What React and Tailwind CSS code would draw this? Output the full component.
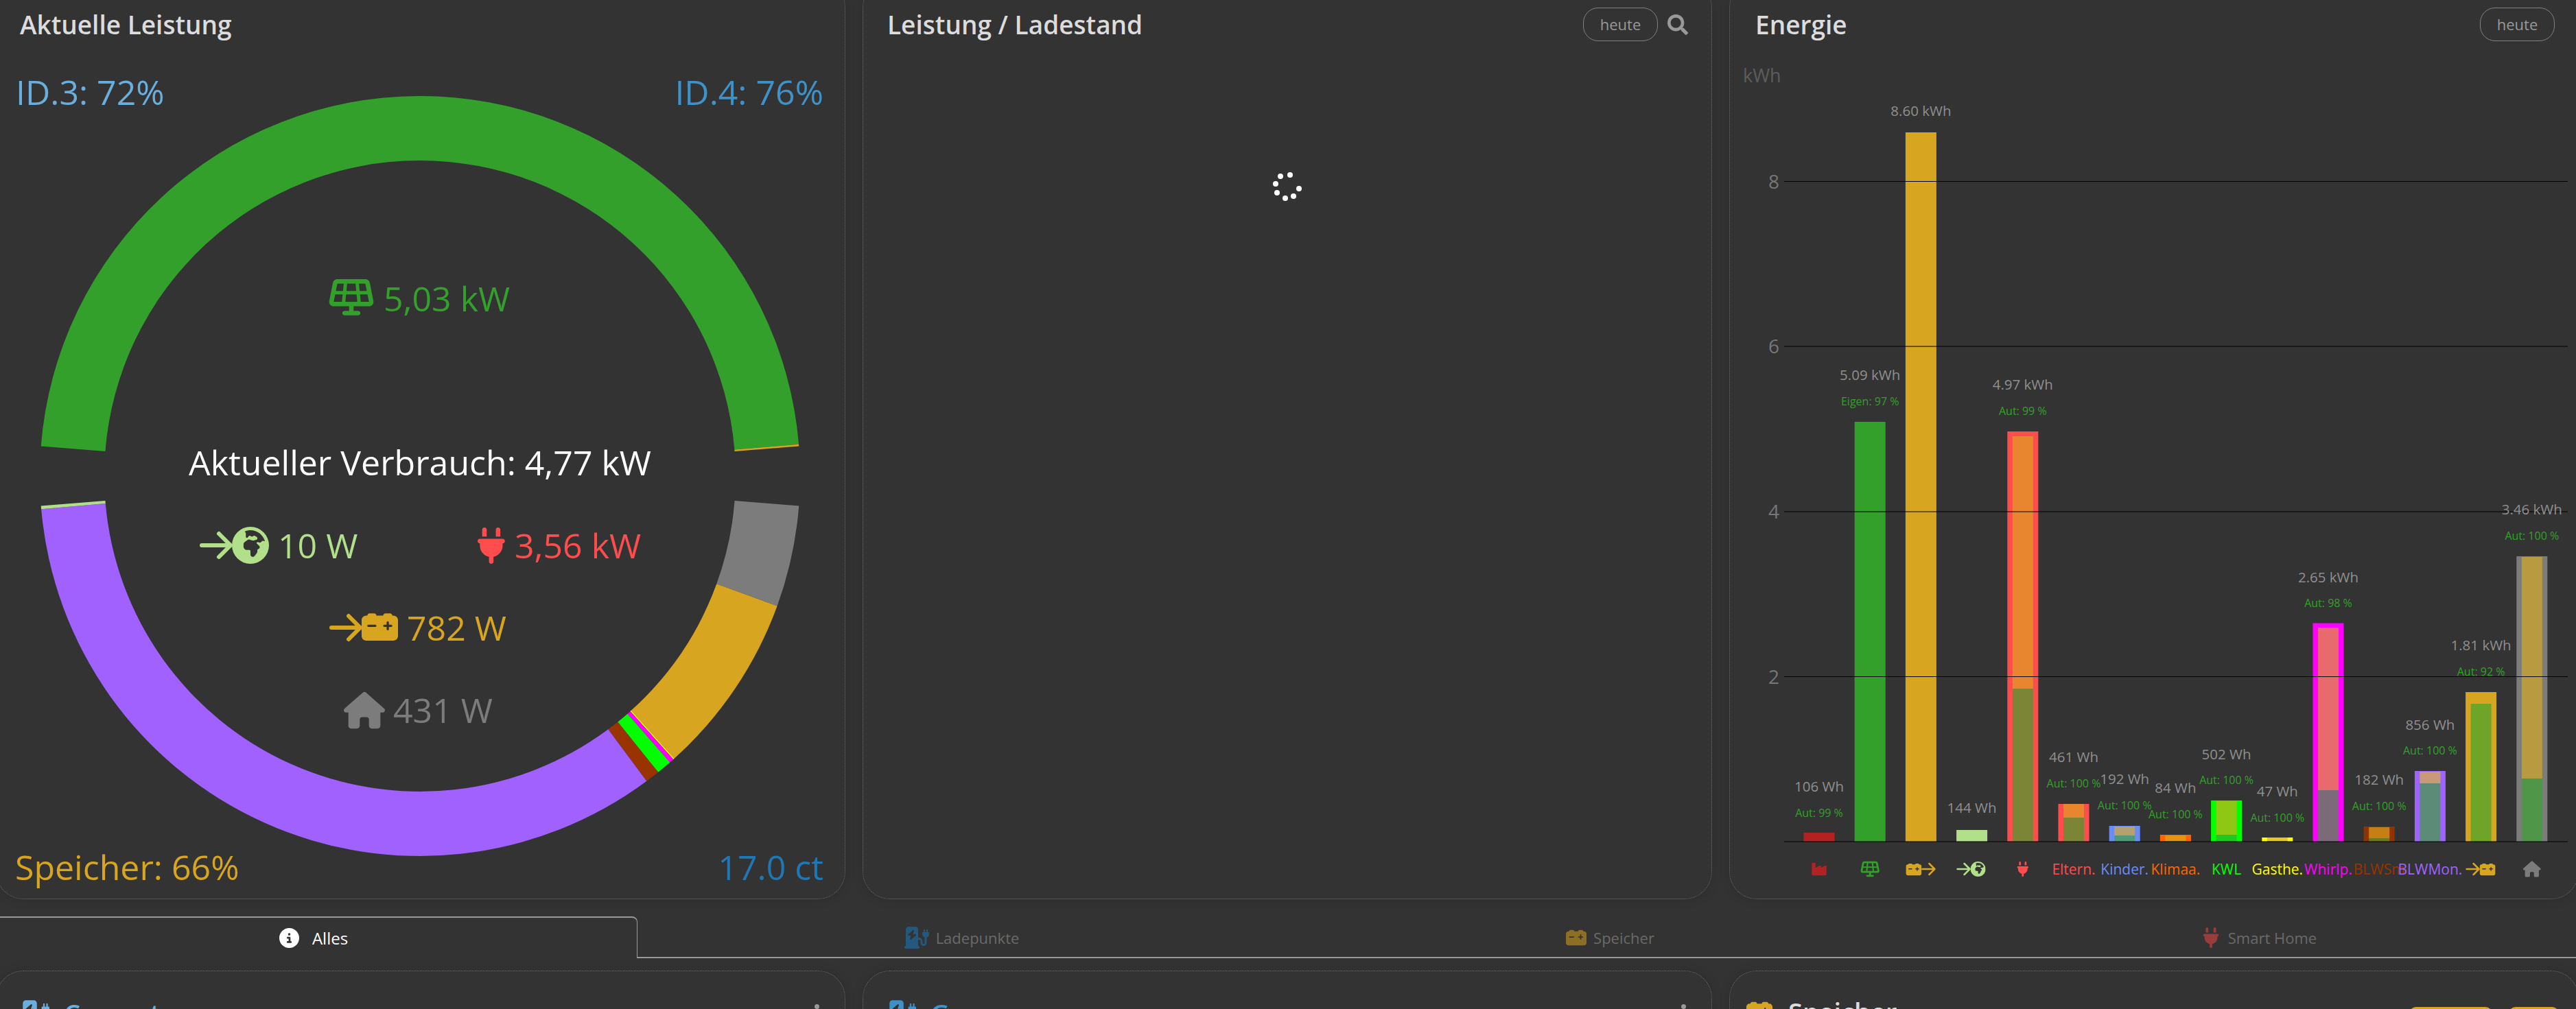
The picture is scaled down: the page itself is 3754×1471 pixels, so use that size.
import { FaSearch } from "react-icons/fa";
import {
  FaSolarPanel,
  FaEarthAfrica,
  FaPlug,
  FaCarBattery,
  FaHouse,
  FaIndustry,
  FaChargingStation,
  FaCircleInfo,
} from "react-icons/fa6";

const GREEN = "#33a02c";
const GOLD = "#d8a520";
const GRID = "#b2df8a";
const RED = "#ff4c4c";
const HOME = "#7c7c7c";
const PURPLE = "#a161ff";

const CX = 611;
const CY = 693;
const R_OUT = 554;
const R_IN = 460;

const arcPath = (a0, a1) => {
  const p = (r, a) => {
    const rad = (a * Math.PI) / 180;
    return `${(CX + r * Math.cos(rad)).toFixed(2)} ${(CY + r * Math.sin(rad)).toFixed(2)}`;
  };
  const large = Math.abs(a1 - a0) > 180 ? 1 : 0;
  return `M${p(R_OUT, a0)} A${R_OUT} ${R_OUT} 0 ${large} 1 ${p(R_OUT, a1)} L${p(R_IN, a1)} A${R_IN} ${R_IN} 0 ${large} 0 ${p(R_IN, a0)} Z`;
};

const SEGMENTS = [
  { from: 184.5, to: 355.2, color: GREEN },
  { from: 355.2, to: 355.5, color: GOLD },
  { from: 4.5, to: 20, color: HOME },
  { from: 20, to: 48, color: GOLD },
  { from: 48, to: 48.2, color: "#ffff00" },
  { from: 48.2, to: 48.9, color: "#ff00ff" },
  { from: 48.9, to: 51.2, color: "#00ff00" },
  { from: 51.2, to: 53.4, color: "#993300" },
  { from: 53.4, to: 175, color: PURPLE },
  { from: 175, to: 175.5, color: GRID },
];

const BARS = [
  { top: 1213, color: "#b22222", value: "106 Wh", aut: "Aut: 99 %", valueY: 1145.5, autY: 1184 },
  { top: 614, color: GREEN, value: "5.09 kWh", aut: "Eigen: 97 %", valueY: 546, autY: 584 },
  { top: 192, color: GOLD, value: "8.60 kWh", valueY: 161 },
  { top: 1209, color: GRID, value: "144 Wh", valueY: 1177 },
  { top: 628, color: RED, value: "4.97 kWh", aut: "Aut: 99 %", valueY: 560, autY: 598, inner: { top: 635, split: 1003, upper: "#e8862f", lower: "#7c8536" } },
  { top: 1171, color: RED, value: "461 Wh", aut: "Aut: 100 %", valueY: 1103, autY: 1141, inner: { top: 1171, split: 1191, upper: "#e8862f", lower: "#7c8536" } },
  { top: 1203, color: "#6b8cf7", value: "192 Wh", aut: "Aut: 100 %", valueY: 1135, autY: 1173, inner: { top: 1204, split: 1217, upper: "#b5a070", lower: "#4f9a78" } },
  { top: 1216, color: "#ff6600", value: "84 Wh", aut: "Aut: 100 %", valueY: 1148, autY: 1186, inner: { top: 1217, split: 1225, upper: "#e8930f", lower: "#8c8a20" } },
  { top: 1166, color: "#00ff00", value: "502 Wh", aut: "Aut: 100 %", valueY: 1099, autY: 1136, inner: { top: 1167, split: 1216, upper: "#8fc814", lower: "#1fc81f" } },
  { top: 1220, color: "#ffff00", value: "47 Wh", aut: "Aut: 100 %", valueY: 1153, autY: 1191, inner: { top: 1220, split: 1225, upper: "#e8c81a", lower: "#8c8a20" } },
  { top: 907.5, color: "#ff00ff", value: "2.65 kWh", aut: "Aut: 98 %", valueY: 840.5, autY: 878, inner: { top: 914, split: 1151, upper: "#e86a6c", lower: "#7d6a78" } },
  { top: 1204, color: "#8f3400", value: "182 Wh", aut: "Aut: 100 %", valueY: 1136, autY: 1174, inner: { top: 1205, split: 1221, upper: "#c57f15", lower: "#6b7a20" } },
  { top: 1123, color: "#9f64ff", value: "856 Wh", aut: "Aut: 100 %", valueY: 1055.5, autY: 1093, inner: { top: 1124, split: 1141, upper: "#c99a78", lower: "#5c8c78" } },
  { top: 1008, color: GOLD, value: "1.81 kWh", aut: "Aut: 92 %", valueY: 940, autY: 978, inner: { top: 1025, split: 1025, upper: "#6ea428", lower: "#6ea428" } },
  { top: 810, color: HOME, value: "3.46 kWh", aut: "Aut: 100 %", valueY: 742, autY: 780, inner: { top: 811, split: 1134, upper: "#b89a40", lower: "#4f9648" } },
];

const BAR_X = (i) => 2650 + 74.2 * i;
const BASE = 1226;

const X_LABELS = [
  [5, "Eltern.", RED],
  [6, "Kinder.", "#6b8cf7"],
  [7, "Klimaa.", "#ff6600"],
  [8, "KWL", "#00ff00"],
  [9, "Gasthe.", "#ffff00"],
  [10, "Whirlp.", "#ff00ff"],
  [11, "BLWSm", "#993300"],
  [12, "BLWMon.", "#9f64ff"],
];

const SPINNER_DOTS = [
  [15, 10],
  [29, 8],
  [8, 21],
  [42, 28],
  [10, 34],
  [22, 42],
  [34, 39],
];

// thin arrow with rounded ends, as in the flow icons
const Arrow = ({ x, y, len, head, width, color }) => (
  <path
    d={`M${x} ${y}H${x + len}M${x + len - head} ${y - head}L${x + len} ${y}L${x + len - head} ${y + head}`}
    fill="none"
    stroke={color}
    strokeWidth={width}
    strokeLinecap="round"
    strokeLinejoin="round"
  />
);

const Title = ({ children }) => (
  <h2 className="text-[37px] leading-none font-semibold text-[#dcdcdc]">{children}</h2>
);

const HeuteButton = () => (
  <button className="h-[49px] w-[109px] rounded-[22px] border border-[#808080] text-[22px] text-[#999999]">
    heute
  </button>
);

const Card = ({ children, className = "" }) => (
  <section
    className={`rounded-[40px] border border-dotted border-[#6e6e6e] bg-[#333333] shadow-[0_0_16px_rgba(0,0,0,0.14)] ${className}`}
  >
    {children}
  </section>
);

const PowerChart = () => (
  <svg width="1238" height="1252" viewBox="-6 59 1238 1252" className="block">
    {SEGMENTS.map((s) => (
      <path key={s.from} d={arcPath(s.from, s.to)} fill={s.color} />
    ))}

    <text x="22" y="152" fontSize="50" fill="#69aedc">ID.3: 72%</text>
    <text x="1199" y="152" fontSize="50" fill="#3f92c8" textAnchor="end">ID.4: 76%</text>

    <FaSolarPanel x="478" y="399.4" size="66" color={GREEN} />
    <text x="558" y="453" fontSize="50" fill={GREEN}>5,03 kW</text>

    <text x="611" y="692" fontSize="50" fill="#ffffff" textAnchor="middle">Aktueller Verbrauch: 4,77 kW</text>

    <Arrow x={293} y={794} len={42} head={17} width={6} color={GRID} />
    <FaEarthAfrica x="337" y="767" size="54" color={GRID} />
    <text x="404" y="813" fontSize="50" fill={GRID}>10 W</text>

    <FaPlug x="688.4" y="768" size="53" color={RED} />
    <text x="749" y="813" fontSize="50" fill={RED}>3,56 kW</text>

    <Arrow x={482} y={914} len={42} head={17} width={6} color={GOLD} />
    <FaCarBattery x="526" y="886.5" size="53" color={GOLD} />
    <text x="592" y="933" fontSize="50" fill={GOLD}>782 W</text>

    <FaHouse x="500" y="1004.5" size="60" color={HOME} />
    <text x="572" y="1053" fontSize="50" fill={HOME}>431 W</text>

    <text x="21" y="1282" fontSize="50" fill={GOLD}>Speicher: 66%</text>
    <text x="1199" y="1282" fontSize="50" fill="#1f77b4" textAnchor="end">17.0 ct</text>
  </svg>
);

const EnergyChart = () => (
  <svg width="1238" height="1252" viewBox="2520 59 1238 1252" className="block">
    <text x="2539" y="119" fontSize="27" fill="#5c5c5c">kWh</text>

    {BARS.map((b, i) => {
      const cx = BAR_X(i);
      return (
        <g key={b.value}>
          <rect x={cx - 22.5} y={b.top} width="45" height={BASE - b.top} fill={b.color} />
          {b.inner && (
            <>
              <rect x={cx - 15} y={b.inner.top} width="30" height={b.inner.split - b.inner.top} fill={b.inner.upper} />
              <rect x={cx - 15} y={b.inner.split} width="30" height={BASE - b.inner.split} fill={b.inner.lower} />
            </>
          )}
        </g>
      );
    })}

    {[
      [8, 263.5],
      [6, 504],
      [4, 745],
      [2, 985.5],
      [0, 1226],
    ].map(([label, y]) => (
      <g key={label}>
        <line x1="2599" x2="3741" y1={y} y2={y} stroke="#000000" strokeWidth="1.2" />
        {label > 0 && (
          <text x="2592" y={y + 10} fontSize="28" fill="#777777" textAnchor="end">{label}</text>
        )}
      </g>
    ))}

    {BARS.map((b, i) => (
      <g key={b.value} textAnchor="middle">
        <text x={BAR_X(i)} y={b.valueY + 7} fontSize="20.5" fill="#8f8f8f">{b.value}</text>
        {b.aut && (
          <text x={BAR_X(i)} y={b.autY + 6} fontSize="16" fill={GREEN}>{b.aut}</text>
        )}
      </g>
    ))}

    <FaIndustry x={BAR_X(0) - 12} y="1254" size="24" color="#b22222" />
    <FaSolarPanel x={BAR_X(1) - 14} y="1252" size="28" color={GREEN} />
    <FaCarBattery x={BAR_X(2) - 22} y="1255" size="23" color={GOLD} />
    <Arrow x={BAR_X(2) + 2} y={1266} len={18} head={8} width={2.5} color={GOLD} />
    <Arrow x={BAR_X(3) - 21} y={1266} len={18} head={8} width={2.5} color={GRID} />
    <FaEarthAfrica x={BAR_X(3) - 2} y="1255" size="22" color={GRID} />
    <FaPlug x={BAR_X(4) - 11} y="1255" size="22" color={RED} />
    <Arrow x={BAR_X(13) - 21} y={1266} len={18} head={8} width={2.5} color={GOLD} />
    <FaCarBattery x={BAR_X(13) - 2} y="1255" size="23" color={GOLD} />
    <FaHouse x={BAR_X(14) - 13} y="1253" size="26" color={HOME} />

    {X_LABELS.map(([i, label, color]) => (
      <text key={label} x={BAR_X(i)} y="1274" fontSize="21" fill={color} textAnchor="middle">{label}</text>
    ))}
  </svg>
);

const Spinner = () => (
  <svg width="50" height="50" viewBox="0 0 50 50" className="mx-auto mt-[187px] block">
    {SPINNER_DOTS.map(([x, y]) => (
      <circle key={`${x}-${y}`} cx={x} cy={y} r="4" fill="#ffffff" />
    ))}
  </svg>
);

const Tab = ({ active, icon, label }) => (
  <div
    className={
      active
        ? "flex h-[61px] w-[943px] items-center justify-center gap-[19px] rounded-tr-[8px] border-t-2 border-r border-[#999999] text-[24px] text-white"
        : "flex h-[61px] w-[945px] items-center justify-center gap-[10px] border-b-2 border-[#999999] pt-[3px] text-[22px] text-[#6a6a6a]"
    }
  >
    {icon}
    <span>{label}</span>
  </div>
);

const MenuDots = () => (
  <div className="flex flex-col gap-[6px] pt-[8px]">
    <span className="h-[7px] w-[7px] rounded-full bg-[#999999]" />
    <span className="h-[7px] w-[7px] rounded-full bg-[#999999]" />
    <span className="h-[7px] w-[7px] rounded-full bg-[#999999]" />
  </div>
);

const ChargePointCard = ({ name, color }) => (
  <Card className="h-[300px] pt-[40px] pl-[36px] pr-[37px]">
    <div className="flex items-start justify-between">
      <div className="flex items-center gap-[21px]">
        <FaChargingStation size="41" color={color} />
        <span className="text-[38px] leading-none font-semibold" style={{ color }}>{name}</span>
      </div>
      <MenuDots />
    </div>
  </Card>
);

export default function App() {
  return (
    <div className="relative h-[1471px] w-[3754px] overflow-hidden bg-[#333333] font-['Open_Sans',sans-serif]">
      <div className="-mt-[29px] -ml-[6px] grid w-[3764px] grid-cols-[1238px_1238px_1238px] gap-[25px]">
        <Card className="h-[1340px] pt-[39px]">
          <div className="flex h-[49px] items-center pl-[34px]">
            <Title>Aktuelle Leistung</Title>
          </div>
          <PowerChart />
        </Card>

        <Card className="h-[1340px] pt-[39px]">
          <div className="flex h-[49px] items-center justify-between pl-[35px] pr-[34px]">
            <Title>Leistung / Ladestand</Title>
            <div className="flex items-center gap-[14px]">
              <HeuteButton />
              <FaSearch size="30" color="#999999" />
            </div>
          </div>
          <Spinner />
        </Card>

        <Card className="h-[1340px] pt-[39px]">
          <div className="flex h-[49px] items-center justify-between pl-[37px] pr-[34px]">
            <Title>Energie</Title>
            <HeuteButton />
          </div>
          <EnergyChart />
        </Card>
      </div>

      <div className="relative z-10 mt-[25px] -ml-[14px] flex w-[3780px] bg-[#333333]">
        <Tab active label="Alles" icon={<FaCircleInfo size="29" color="#ffffff" />} />
        <Tab label="Ladepunkte" icon={<FaChargingStation size="36" color="#25587d" />} />
        <Tab label="Speicher" icon={<FaCarBattery size="30" color="#8c6f25" />} />
        <Tab label="Smart Home" icon={<FaPlug size="30" color="#983c3c" />} />
      </div>

      <div className="mt-[18px] -ml-[6px] grid w-[3764px] grid-cols-[1238px_1238px_1238px] gap-[25px]">
        <ChargePointCard name="Carport" color="#69aedc" />
        <ChargePointCard name="Garage" color="#3f92c8" />
        <Card className="h-[300px] pt-[40px] pl-[24px] pr-[28px]">
          <div className="flex items-start justify-between">
            <div className="flex items-center gap-[23px]">
              <FaCarBattery size="38" color={GOLD} />
              <span className="text-[38px] leading-none font-semibold text-[#dcdcdc]">Speicher</span>
            </div>
            <div className="flex gap-[24px] pt-[12px]">
              <div className="h-[40px] w-[121px] rounded-[10px] bg-[#d8a520]" />
              <div className="h-[40px] w-[73px] rounded-[10px] bg-[#d8a520]" />
            </div>
          </div>
        </Card>
      </div>
    </div>
  );
}
